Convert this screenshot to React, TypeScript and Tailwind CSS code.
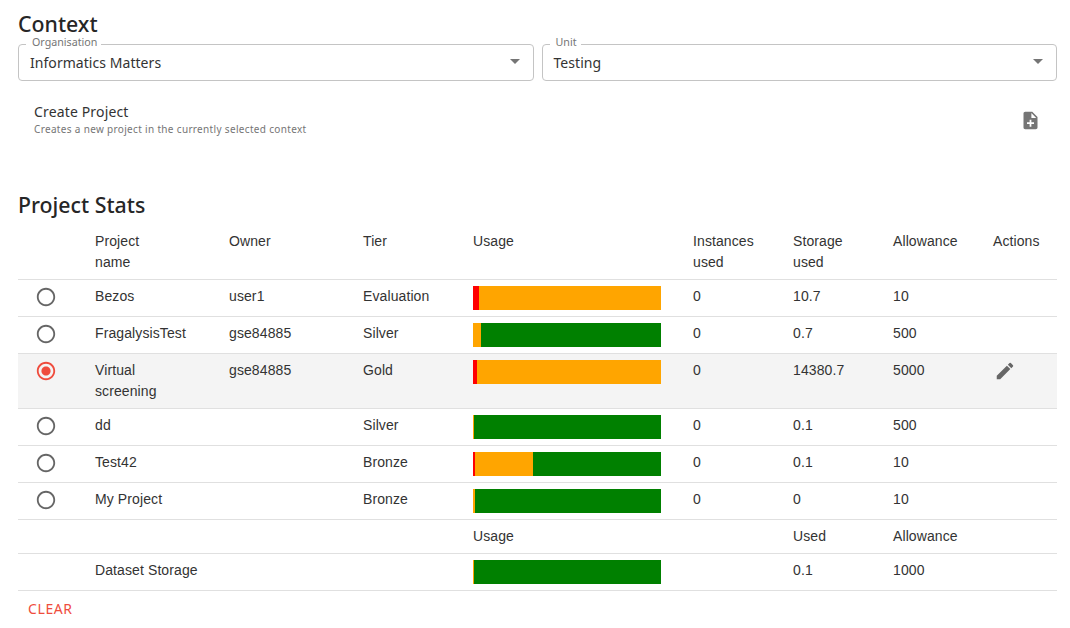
import React from "react";

const FONT_UI = "font-['Noto_Sans','Open_Sans',sans-serif]";

function Icon({ d, className }: { d: string; className?: string }) {
  return (
    <svg viewBox="0 0 24 24" className={className} fill="currentColor">
      <path d={d} />
    </svg>
  );
}

const ARROW = "M7 10l5 5 5-5z";
const NOTE_ADD =
  "M14 2H6c-1.1 0-1.99.9-1.99 2L4 20c0 1.1.89 2 1.99 2H18c1.1 0 2-.9 2-2V8l-6-6zm2 14h-3v3h-2v-3H8v-2h3v-3h2v3h3v2zm-3-7V3.5L18.5 9H13z";
const EDIT =
  "M3 17.25V21h3.75L17.81 9.94l-3.75-3.75L3 17.25zM20.71 7.04c.39-.39.39-1.02 0-1.41l-2.34-2.34a.9959.9959 0 0 0-1.41 0l-1.83 1.83 3.75 3.75 1.83-1.83z";
const RADIO_OFF =
  "M12 2C6.48 2 2 6.48 2 12s4.48 10 10 10 10-4.48 10-10S17.52 2 12 2zm0 18c-4.42 0-8-3.58-8-8s3.58-8 8-8 8 3.58 8 8-3.58 8-8 8z";
const RADIO_DOT = "M12 7c-2.76 0-5 2.24-5 5s2.24 5 5 5 5-2.24 5-5-2.24-5-5-5z";

function Select({ label, value }: { label: string; value: string }) {
  return (
    <fieldset className="flex-1 h-[41px] -mt-[4px] border border-[#c4c4c4] rounded-[4px] pl-[7px] pr-[12px] pb-[3px] flex items-center">
      <legend className="text-[10.7px] leading-[9px] text-[#757575] pl-[6px] pr-[4px]">
        <span className="block -translate-y-[2px]">{label}</span>
      </legend>
      <div className="flex-1 pl-[4px] text-[14px] leading-[20px] tracking-[0.05px] text-[#333]">{value}</div>
      <Icon d={ARROW} className="w-[24px] h-[24px] text-[#757575] -mr-[6px] -mt-[4px]" />
    </fieldset>
  );
}

function Bar({ red = 0, orange = 0 }: { red?: number; orange?: number }) {
  return (
    <div className="flex w-[188px] h-[24px] bg-[#008000]">
      {red > 0 && <div className="bg-[#ff0000] h-full" style={{ width: red }} />}
      {orange > 0 && <div className="bg-[#ffa500] h-full" style={{ width: orange }} />}
    </div>
  );
}

function Radio({ checked }: { checked?: boolean }) {
  return (
    <div className="flex justify-center -ml-[22px] -mr-[16px]">
      <svg viewBox="0 0 24 24" className={"w-[22px] h-[22px] " + (checked ? "text-[#ef4c3d]" : "text-[#666]")} fill="currentColor">
        <path d={RADIO_OFF} />
        {checked && <path d={RADIO_DOT} />}
      </svg>
    </div>
  );
}

type Row = {
  name: string;
  owner: string;
  tier: string;
  red: number;
  orange: number;
  inst: string;
  used: string;
  allow: string;
  selected?: boolean;
};

const rows: Row[] = [
  { name: "Bezos", owner: "user1", tier: "Evaluation", red: 6, orange: 182, inst: "0", used: "10.7", allow: "10" },
  { name: "FragalysisTest", owner: "gse84885", tier: "Silver", red: 0, orange: 8, inst: "0", used: "0.7", allow: "500" },
  { name: "Virtual screening", owner: "gse84885", tier: "Gold", red: 4, orange: 184, inst: "0", used: "14380.7", allow: "5000", selected: true },
  { name: "dd", owner: "", tier: "Silver", red: 0, orange: 1, inst: "0", used: "0.1", allow: "500" },
  { name: "Test42", owner: "", tier: "Bronze", red: 2, orange: 58, inst: "0", used: "0.1", allow: "10" },
  { name: "My Project", owner: "", tier: "Bronze", red: 0, orange: 2, inst: "0", used: "0", allow: "10" },
];

const cell = "px-[16px] py-[6px] align-top text-left font-normal border-b border-[#e0e0e0]";

export default function App() {
  return (
    <div className={"w-[1070px] h-[628px] overflow-hidden bg-white px-[18px] pr-[13px] pt-[14px] text-[#2b2b2b] " + FONT_UI}>
      <h2 className="text-[21.3px] leading-[20px] font-medium text-[#262626]">Context</h2>
      <div className="flex gap-[8px] mt-[10px]">
        <Select label="Organisation" value="Informatics Matters" />
        <Select label="Unit" value="Testing" />
      </div>

      <div className="flex items-center justify-between pl-[16px] pr-[16px] mt-[18px] h-[40px]">
        <div>
          <div className="text-[14px] leading-[20px] tracking-[0.15px] text-[#333]">Create Project</div>
          <div className="text-[10px] leading-[14px] tracking-[0.33px] text-[#757575]">Creates a new project in the currently selected context</div>
        </div>
        <Icon d={NOTE_ADD} className="w-[21px] h-[21px] text-[#757575] mt-[3px]" />
      </div>

      <h2 className="text-[21.3px] leading-[28px] font-medium text-[#262626] mt-[52px]">Project Stats</h2>

      <table className="w-[1039px] table-fixed border-collapse mt-[6px] font-['Liberation_Sans',sans-serif] text-[14px] leading-[21px] tracking-[0.1px] text-[#333]">
        <colgroup>
          <col className="w-[61px]" />
          <col className="w-[134px]" />
          <col className="w-[134px]" />
          <col className="w-[110px]" />
          <col className="w-[220px]" />
          <col className="w-[100px]" />
          <col className="w-[100px]" />
          <col className="w-[100px]" />
          <col className="w-[80px]" />
        </colgroup>
        <thead>
          <tr>
            <th className={cell}></th>
            <th className={cell}>Project<br />name</th>
            <th className={cell}>Owner</th>
            <th className={cell}>Tier</th>
            <th className={cell}>Usage</th>
            <th className={cell}>Instances used</th>
            <th className={cell}>Storage used</th>
            <th className={cell}>Allowance</th>
            <th className={cell}>Actions</th>
          </tr>
        </thead>
        <tbody>
          {rows.map((r) => (
            <tr key={r.name} className={r.selected ? "bg-[#f4f4f4]" : ""}>
              <td className={cell}>
                <Radio checked={r.selected} />
              </td>
              <td className={cell}>
                <div className="max-w-[92px]">{r.name}</div>
              </td>
              <td className={cell}>{r.owner}</td>
              <td className={cell}>{r.tier}</td>
              <td className={cell}>
                <Bar red={r.red} orange={r.orange} />
              </td>
              <td className={cell}>{r.inst}</td>
              <td className={cell}>{r.used}</td>
              <td className={cell}>{r.allow}</td>
              <td className={cell}>
                {r.selected && <Icon d={EDIT} className="w-[22px] h-[22px] text-[#666] ml-[1px]" />}
              </td>
            </tr>
          ))}
          <tr>
            <td className={cell}></td>
            <td className={cell}></td>
            <td className={cell}></td>
            <td className={cell}></td>
            <td className={cell}>Usage</td>
            <td className={cell}></td>
            <td className={cell}>Used</td>
            <td className={cell}>Allowance</td>
            <td className={cell}></td>
          </tr>
          <tr>
            <td className={cell}></td>
            <td className={cell} colSpan={3}>Dataset Storage</td>
            <td className={cell}>
              <Bar orange={1} />
            </td>
            <td className={cell}></td>
            <td className={cell}>0.1</td>
            <td className={cell}>1000</td>
            <td className={cell}></td>
          </tr>
        </tbody>
      </table>

      <div className="pl-[10px] mt-[8px] text-[14px] leading-[20px] tracking-[0.6px] text-[#ef4c3d]">CLEAR</div>
    </div>
  );
}
